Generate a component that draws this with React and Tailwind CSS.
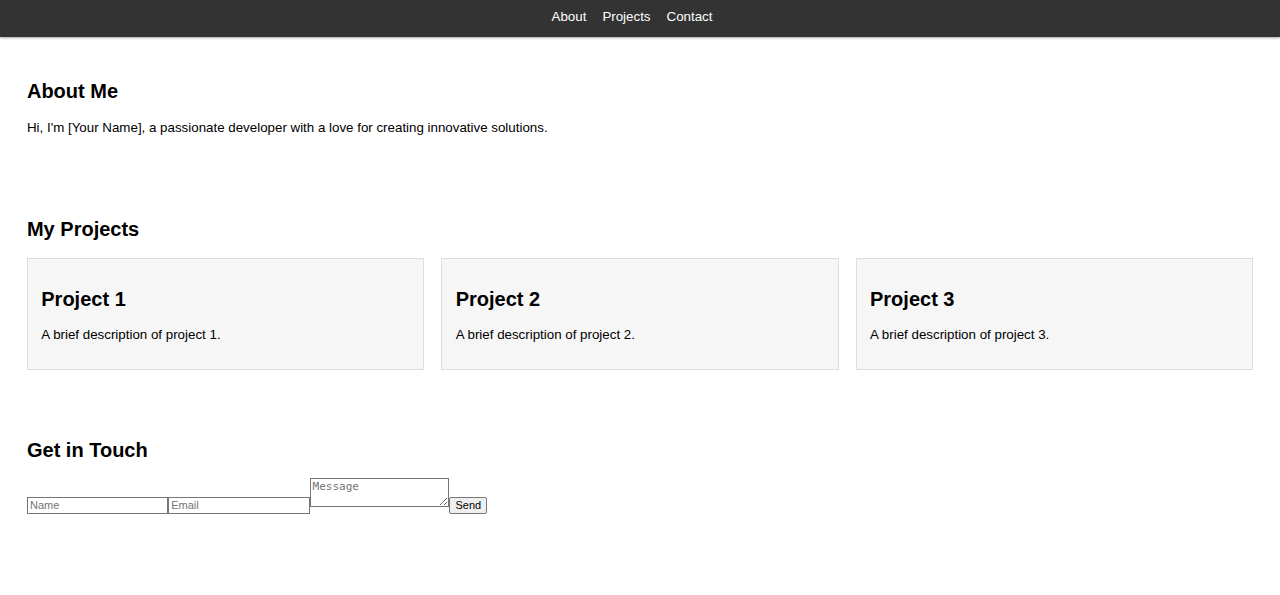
import React from "react";

export default function App() {
  const projects = [1, 2, 3];
  return (
    <div className="min-h-[595px] bg-white text-black font-['Liberation_Sans',Arial,sans-serif]">
      <header className="h-[37px] bg-[#333] shadow-[0_1px_2px_rgba(0,0,0,0.35)] flex justify-center items-start pt-[9.3px]">
        <nav className="flex text-[13.33px] leading-[15.33px] text-white">
          <a className="mr-4">About</a>
          <a className="mr-4">Projects</a>
          <a className="mr-4">Contact</a>
        </nav>
      </header>

      <main className="pt-[0.5px] px-[0.3px]">
        <section className="p-[26.67px]">
          <h2 className="text-[20px] font-bold leading-[23px] mt-[15.6px] mb-[17.6px]">About Me</h2>
          <p className="text-[13.33px] leading-[15.33px] mb-[13.3px]">
            Hi, I'm [Your Name], a passionate developer with a love for creating innovative solutions.
          </p>
        </section>

        <section className="p-[26.67px]">
          <h2 className="text-[20px] font-bold leading-[23px] mt-[15.6px] mb-[17.6px]">My Projects</h2>
          <div className="grid grid-cols-3 gap-[17px]">
            {projects.map((n) => (
              <div key={n} className="bg-[#f6f6f6] border border-[#dddddd] p-[13.33px]">
                <h3 className="text-[20px] font-bold leading-[23px] mt-[15px] mb-[16.2px]">Project {n}</h3>
                <p className="text-[13.33px] leading-[15.33px] mb-[13.3px]">A brief description of project {n}.</p>
              </div>
            ))}
          </div>
        </section>

        <section className="p-[26.67px]">
          <h2 className="text-[20px] font-bold leading-[23px] mt-[15.6px] mb-[16.6px]">Get in Touch</h2>
          <form className="flex items-start">
            <input
              type="text"
              placeholder="Name"
              className="mt-[18.5px] w-[141.3px] h-[17px] border border-[#767676] px-[2px] text-[11px] leading-[13px] font-['Liberation_Sans',Arial,sans-serif] placeholder:text-[#757575] outline-none"
            />
            <input
              type="email"
              placeholder="Email"
              className="mt-[18.5px] w-[141.3px] h-[17px] border border-[#767676] px-[2px] text-[11px] leading-[13px] font-['Liberation_Sans',Arial,sans-serif] placeholder:text-[#757575] outline-none"
            />
            <textarea
              placeholder="Message"
              className="w-[139.6px] h-[29px] border border-[#767676] px-[2px] py-[1px] text-[11px] leading-[13px] font-['DejaVu_Sans_Mono',monospace] placeholder:text-[#757575] outline-none resize-y"
            />
            <button
              type="button"
              className="mt-[18.5px] w-[38.3px] h-[17px] bg-[#efefef] border border-[#767676] rounded-[2px] text-[11px] leading-[13px] text-black font-['Liberation_Sans',Arial,sans-serif] flex items-center justify-center"
            >
              Send
            </button>
          </form>
        </section>
      </main>
    </div>
  );
}
